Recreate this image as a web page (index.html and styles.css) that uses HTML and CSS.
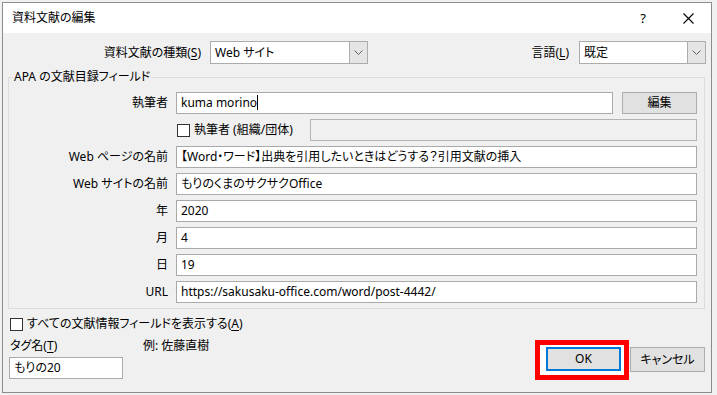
FILE: index.html
```html
<!DOCTYPE html>
<html lang="ja">
<head>
    <meta charset="UTF-8">
    <title>資料文献の編集</title>
    <link rel="stylesheet" href="styles.css">
</head>
<body>
    <div class="dialog">
        <div class="titlebar">
            <span class="title">資料文献の編集</span>
            <span class="help">?</span>
            <span class="close">
                <svg width="11" height="11" viewBox="0 0 11 11"><path d="M0.5 0.5 L10.5 10.5 M10.5 0.5 L0.5 10.5" stroke="#000" stroke-width="1.1" fill="none"/></svg>
            </span>
        </div>

        <div class="content">
            <div class="top-row">
                <span class="type-label">資料文献の種類(<u>S</u>)</span>
                <div class="combo combo-type">
                    <span class="combo-value">Web サイト</span>
                    <span class="combo-arrow"><svg width="9" height="5" viewBox="0 0 9 5"><path d="M0.5 0.5 L4.5 4.5 L8.5 0.5" stroke="#606060" fill="none"/></svg></span>
                </div>
                <span class="lang-label">言語(<u>L</u>)</span>
                <div class="combo combo-lang">
                    <span class="combo-value">既定</span>
                    <span class="combo-arrow"><svg width="9" height="5" viewBox="0 0 9 5"><path d="M0.5 0.5 L4.5 4.5 L8.5 0.5" stroke="#606060" fill="none"/></svg></span>
                </div>
            </div>

            <fieldset class="group">
                <legend>APA の文献目録フィールド</legend>
                <div class="fields">
                    <span class="field-label">執筆者</span>
                    <div class="field-line">
                        <div class="textbox author">kuma morino<span class="caret"></span></div>
                        <button class="btn btn-edit">編集</button>
                    </div>

                    <span class="field-label"></span>
                    <div class="field-line">
                        <span class="check-label"><span class="checkbox"></span>執筆者 (組織/団体)</span>
                        <div class="textbox disabled"></div>
                    </div>

                    <span class="field-label">Web ページの名前</span>
                    <div class="textbox">【Word・ワード】出典を引用したいときはどうする？引用文献の挿入</div>

                    <span class="field-label">Web サイトの名前</span>
                    <div class="textbox">もりのくまのサクサクOffice</div>

                    <span class="field-label">年</span>
                    <div class="textbox">2020</div>

                    <span class="field-label">月</span>
                    <div class="textbox">4</div>

                    <span class="field-label">日</span>
                    <div class="textbox">19</div>

                    <span class="field-label">URL</span>
                    <div class="textbox">https://sakusaku-office.com/word/post-4442/</div>
                </div>
            </fieldset>

            <div class="show-all"><span class="checkbox"></span>すべての文献情報フィールドを表示する(<u>A</u>)</div>

            <div class="bottom">
                <div class="tag">
                    <div class="tag-labels">
                        <span class="tag-name">タグ名(<u>T</u>)</span>
                        <span class="example">例: 佐藤直樹</span>
                    </div>
                    <div class="textbox tag-box">もりの20</div>
                </div>
                <div class="actions">
                    <div class="highlight"><button class="btn btn-ok">OK</button></div>
                    <button class="btn btn-cancel">キャンセル</button>
                </div>
            </div>
        </div>
    </div>
</body>
</html>
```

FILE: styles.css
```css
body {
    margin: 0;
    background: #f0f0f0;
    font-family: "Noto Sans", "Noto Sans CJK JP", sans-serif;
    font-size: 12px;
    line-height: 16px;
    color: #000;
    font-feature-settings: "palt";
}
u { text-decoration: underline; text-underline-offset: 2px; }

.dialog {
    width: 708px;
    height: 389px;
    margin: 2px 0 0 2px;
    border: 1px solid #8c8c8c;
    background: #f0f0f0;
    overflow: hidden;
}

/* title bar */
.titlebar {
    height: 30px;
    background: #fff;
    display: flex;
    align-items: center;
    padding-left: 9px;
}
.title { flex: 1; }
.help { width: 44px; text-align: center; font-size: 13px; }
.close {
    width: 46px;
    height: 30px;
    display: flex;
    align-items: center;
    justify-content: center;
}

.content { padding-top: 8px; }

/* type / language row */
.top-row {
    display: flex;
    align-items: center;
    padding-right: 5px;
}
.type-label { width: 198px; text-align: right; }
.lang-label { margin-left: auto; }
.combo {
    height: 23px;
    box-sizing: border-box;
    border: 1px solid #acacac;
    background: #fff;
    display: flex;
}
.combo-type { width: 158px; margin-left: 9px; }
.combo-lang { width: 127px; margin-left: 10px; }
.combo-value { flex: 1; padding-left: 4px; line-height: 21px; }
.combo-arrow {
    width: 17px;
    background: #e5e5e5;
    border-left: 1px solid #acacac;
    display: flex;
    align-items: center;
    justify-content: center;
}

/* group */
.group {
    border: 1px solid #dcdcdc;
    margin: 5px 6px 0 5px;
    padding: 7px 7px 5px 0;
    min-width: 0;
}
.group legend {
    margin-left: 4px;
    padding: 0 1px;
    line-height: 16px;
}
.fields {
    display: grid;
    grid-template-columns: 159px 1fr;
    grid-auto-rows: 22px;
    column-gap: 8px;
    row-gap: 5px;
}
.field-label { text-align: right; line-height: 22px; }
.field-line { display: flex; align-items: center; }

.textbox {
    height: 22px;
    box-sizing: border-box;
    border: 1px solid #a9a9a9;
    background: #fff;
    padding-left: 4px;
    line-height: 20px;
    white-space: nowrap;
    overflow: hidden;
}
.author { flex: 1; }
.caret {
    display: inline-block;
    width: 1px;
    height: 15px;
    background: #000;
    vertical-align: -3px;
}
.disabled { flex: 1; background: #f0f0f0; border-color: #b4b4b4; }

.check-label {
    width: 134px;
    display: flex;
    align-items: center;
}
.checkbox {
    width: 13px;
    height: 13px;
    box-sizing: border-box;
    border: 1px solid #333;
    background: #fff;
    margin: 0 4px 0 1px;
    flex: none;
}

/* buttons */
.btn {
    font: inherit;
    color: #000;
    background: #e1e1e1;
    border: 1px solid #adadad;
    padding: 0;
}
.btn-edit { width: 75px; height: 22px; margin-left: 9px; }

.show-all {
    display: flex;
    align-items: center;
    margin-top: 7px;
    padding-left: 6px;
}
.show-all .checkbox { margin-right: 4px; }

.bottom {
    display: flex;
    align-items: flex-start;
    margin-top: 6px;
}
.tag { padding-left: 6px; }
.tag-labels { display: flex; }
.tag-name { width: 133px; padding-left: 1px; }
.tag-box { width: 114px; margin-top: 3px; }

.actions {
    margin-left: auto;
    margin-right: 6px;
    margin-top: 2px;
    display: flex;
    align-items: flex-start;
}
.highlight {
    border: 5px solid #ff0000;
    background: #fff;
    padding: 2px 3px 4px 6px;
}
.btn-ok {
    width: 75px;
    height: 24px;
    border: 2px solid #0078d7;
    display: block;
}
.btn-cancel {
    width: 75px;
    height: 25px;
    margin: 7px 0 0 1px;
}
```
